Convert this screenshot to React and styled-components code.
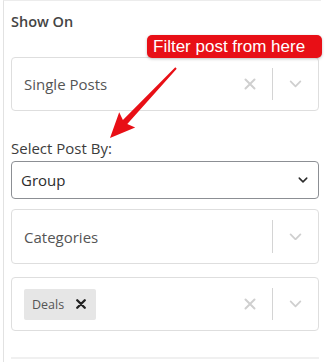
import React from 'react'
import styled, { createGlobalStyle } from 'styled-components'

const Global = createGlobalStyle`
  body {
    margin: 0;
    background: #fff;
    font-family: "Open Sans", "Noto Sans", sans-serif;
  }
`

const Page = styled.div`
  position: relative;
  width: 336px;
  height: 362px;
  overflow: hidden;
`

const Panel = styled.section`
  margin-left: 3px;
  height: 362px;
  box-sizing: border-box;
  border-left: 1px solid #e2e2e2;
  border-top: 1px solid #ececec;
  padding: 11px 0 0 7px;
  width: 318px;
  display: flex;
  flex-direction: column;
`

const Heading = styled.div`
  font-size: 14.5px;
  font-weight: 600;
  color: #444;
  line-height: 20px;
  margin-bottom: 25px;
`

const Label = styled.div`
  font-size: 15px;
  color: #3c3c3c;
  line-height: 20px;
  margin-top: 27px;
  margin-bottom: 3px;
`

const Multi = styled.div`
  box-sizing: border-box;
  width: 308px;
  height: ${p => p.$h || 54}px;
  border: 1px solid #dedede;
  border-radius: 4px;
  display: flex;
  align-items: center;
  margin-top: ${p => p.$mt || 0}px;
  background: #fff;
`

const Value = styled.div`
  flex: 1;
  padding-left: 12px;
  font-size: 15px;
  color: #555;
  display: flex;
  align-items: center;
`

const Clear = styled.div`
  width: 22px;
  display: flex;
  justify-content: center;
  margin-right: 11px;
`

const Sep = styled.div`
  width: 1px;
  align-self: stretch;
  margin: 10px 0;
  background: #d4d4d4;
`

const Caret = styled.div`
  width: 45px;
  display: flex;
  justify-content: center;
`

const Select = styled.div`
  box-sizing: border-box;
  width: 308px;
  height: 38px;
  border: 1px solid #8c8f94;
  border-radius: 4px;
  display: flex;
  align-items: center;
  justify-content: space-between;
  padding: 0 10px 0 9px;
  font-size: 15px;
  color: #2c2c2c;
`

const Tag = styled.div`
  display: flex;
  align-items: center;
  gap: 12px;
  background: #e6e6e6;
  border-radius: 2px;
  height: 31px;
  padding: 0 10px 0 8px;
  font-size: 12.5px;
  color: #555;
`

const Rule = styled.hr`
  width: 308px;
  margin: 26px 0 0;
  border: none;
  border-top: 2px solid #f0f0f0;
`

const Tip = styled.div`
  position: absolute;
  left: 147px;
  top: 35px;
  width: 175px;
  height: 23px;
  box-sizing: border-box;
  background: #e80f16;
  border-radius: 5px;
  color: #fff;
  font-family: "Liberation Sans", Arial, sans-serif;
  font-size: 17px;
  line-height: 23px;
  padding-left: 6px;
  box-shadow: 0 1px 3px rgba(0,0,0,0.25);
  white-space: nowrap;
`

const Overlay = styled.svg`
  position: absolute;
  left: 0;
  top: 0;
  pointer-events: none;
`

const XIcon = ({ color = '#cfcfcf', size = 12, w = 2 }) => (
  <svg width={size} height={size} viewBox="0 0 12 12">
    <path d="M1.5 1.5 L10.5 10.5 M10.5 1.5 L1.5 10.5" stroke={color} strokeWidth={w} strokeLinecap="round" />
  </svg>
)

const Chevron = ({ color = '#cfcfcf', w = 13, sw = 1.8 }) => (
  <svg width={w} height={w * 0.6} viewBox="0 0 13 8">
    <path d="M1.5 1.5 L6.5 6.5 L11.5 1.5" fill="none" stroke={color} strokeWidth={sw} strokeLinecap="round" strokeLinejoin="round" />
  </svg>
)

const MultiSelect = ({ children, clear, h, mt }) => (
  <Multi $h={h} $mt={mt}>
    <Value>{children}</Value>
    {clear && <Clear><XIcon /></Clear>}
    <Sep />
    <Caret><Chevron /></Caret>
  </Multi>
)

const App = () => {
  return (
    <Page>
      <Global />
      <Panel>
        <Heading>Show On</Heading>
        <MultiSelect clear>Single Posts</MultiSelect>
        <Label>Select Post By:</Label>
        <Select>
          <span>Group</span>
          <Chevron color="#2c2c2c" w={10} sw={2} />
        </Select>
        <MultiSelect h={55} mt={10}>Categories</MultiSelect>
        <MultiSelect clear mt={13}>
          <Tag>Deals<XIcon color="#222" size={10} w={2.8} /></Tag>
        </MultiSelect>
        <Rule />
      </Panel>
      <Tip>Filter post from here</Tip>
      <Overlay width="336" height="362" viewBox="0 0 336 362">
        <polygon
          points="175.3,67.3 176.7,68.7 127.3,124.1 135.2,127.4 110,138 119.2,112.3 122.9,119.9"
          fill="#e80f16"
        />
      </Overlay>
    </Page>
  )
}

export default App
